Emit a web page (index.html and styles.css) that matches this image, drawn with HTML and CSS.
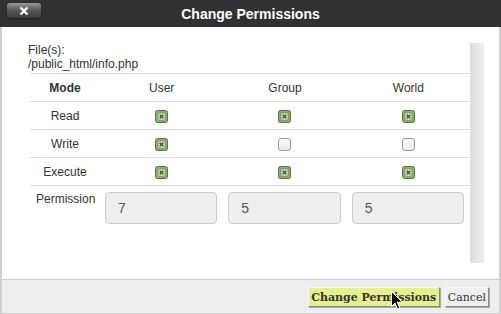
FILE: index.html
```html
<!DOCTYPE html>
<html>
  <head>
    <title>Change Permissions</title>
    <link rel="stylesheet" href="styles.css">
  </head>
  <body>
    <svg width="0" height="0" class="defs">
      <symbol id="cb-on" viewBox="0 0 13 13">
        <rect x="0.5" y="0.5" width="12" height="12" rx="2" fill="#8fae72" stroke="#587542" />
        <rect x="3" y="3" width="7" height="7" fill="#eef3e8" stroke="#6f8e58" stroke-width="0.8" />
        <path d="M4.6 4.6l3.8 3.8M8.4 4.6l-3.8 3.8" stroke="#45632f" stroke-width="1.5" />
      </symbol>
    </svg>

    <div class="dialog">
      <div class="titlebar">
        <div class="tb-left">
          <button class="close-btn" title="Close">
            <svg width="10" height="10" viewBox="0 0 10 10">
              <path d="M1.5 1.5l7 7M8.5 1.5l-7 7" stroke="#fff" stroke-width="2.4" />
            </svg>
          </button>
        </div>
        <div class="title">Change Permissions</div>
        <div></div>
      </div>

      <div class="panel">
        <div class="content">
          <div class="files">
            <div>File(s):</div>
            <div>/public_html/info.php</div>
          </div>

          <table class="perms">
            <tr>
              <th class="mode-col">Mode</th>
              <td>User</td>
              <td>Group</td>
              <td>World</td>
            </tr>
            <tr>
              <td>Read</td>
              <td><svg class="cb"><use href="#cb-on" /></svg></td>
              <td><svg class="cb"><use href="#cb-on" /></svg></td>
              <td><svg class="cb"><use href="#cb-on" /></svg></td>
            </tr>
            <tr>
              <td>Write</td>
              <td><svg class="cb"><use href="#cb-on" /></svg></td>
              <td><span class="cb-off"></span></td>
              <td><span class="cb-off"></span></td>
            </tr>
            <tr>
              <td>Execute</td>
              <td><svg class="cb"><use href="#cb-on" /></svg></td>
              <td><svg class="cb"><use href="#cb-on" /></svg></td>
              <td><svg class="cb"><use href="#cb-on" /></svg></td>
            </tr>
            <tr class="perm-row">
              <td>Permission</td>
              <td class="perm-cell"><input type="text" class="perm-input" value="7" readonly /></td>
              <td class="perm-cell"><input type="text" class="perm-input" value="5" readonly /></td>
              <td class="perm-cell"><input type="text" class="perm-input" value="5" readonly /></td>
            </tr>
          </table>
        </div>
        <div class="scrollbar"></div>
      </div>

      <div class="footer">
        <button class="btn btn-primary">Change Permissions</button>
        <button class="btn">Cancel</button>
        <svg class="cursor" width="12" height="19" viewBox="0 0 12 19">
          <path d="M0.5 0.5v15l3.5-3.5 2.5 6 2.2-1-2.5-5.8h5z" fill="#000" stroke="#fff" stroke-width="1" />
        </svg>
      </div>
    </div>
  </body>
</html>
```

FILE: styles.css
```css
body {
  margin: 0;
  font-family: "Liberation Sans", Arial, sans-serif;
  font-size: 12px;
  color: #333;
  background: #fff;
}
.defs {
  position: absolute;
}
.dialog {
  width: 501px;
  height: 314px;
  display: flex;
  flex-direction: column;
}
.titlebar {
  height: 27px;
  background: #313131;
  display: grid;
  grid-template-columns: 1fr auto 1fr;
  align-items: center;
}
.tb-left {
  align-self: start;
}
.close-btn {
  margin: 3px 0 0 7px;
  width: 34px;
  height: 15px;
  padding: 0;
  border: none;
  border-radius: 3px;
  background: linear-gradient(#9a9a9a, #5a5a5a 45%, #3c3c3c);
  box-shadow: 0 1px 2px rgba(0, 0, 0, 0.5);
  display: flex;
  align-items: center;
  justify-content: center;
}
.title {
  color: #fff;
  font-weight: bold;
  font-size: 14px;
}
.panel {
  height: 252px;
  box-sizing: border-box;
  border-left: 2px solid #cfcfcf;
  border-right: 2px solid #cfcfcf;
  padding: 16px 15px 16px 26px;
  display: flex;
}
.content {
  flex: 1;
}
.scrollbar {
  width: 14px;
  background: linear-gradient(to right, #dcdcdc, #eeeeee);
}
.files {
  line-height: 14px;
  padding-bottom: 2px;
}
.perms {
  margin-left: 2px;
  width: 440px;
  border-collapse: collapse;
  table-layout: fixed;
}
.perms th,
.perms td {
  border-top: 1px solid #dddddd;
  height: 27px;
  padding: 0 6px;
  text-align: center;
  vertical-align: middle;
}
.perms .mode-col {
  width: 58px;
}
.cb {
  width: 13px;
  height: 13px;
  display: inline-block;
  vertical-align: middle;
}
.cb-off {
  display: inline-block;
  vertical-align: middle;
  width: 11px;
  height: 11px;
  border: 1px solid #9a9a9a;
  border-radius: 3px;
  background: linear-gradient(#fbfbfb, #e9e9e9);
}
.perm-row td {
  vertical-align: top;
  padding-top: 6px;
  line-height: 14px;
}
.perms .perm-cell {
  padding: 6px 6px 0 5px;
}
.perm-input {
  width: 100%;
  height: 32px;
  box-sizing: border-box;
  border: 1px solid #cccccc;
  border-radius: 4px;
  background: #eeeeee;
  color: #555;
  font-family: "Liberation Sans", Arial, sans-serif;
  font-size: 14px;
  padding: 0 12px;
}
.footer {
  position: relative;
  height: 35px;
  box-sizing: border-box;
  background: #eeeeee;
  border: 1px solid #cccccc;
  border-left: 2px solid #cfcfcf;
  border-right: 2px solid #cfcfcf;
  padding: 7px 10px 0 0;
  display: flex;
  justify-content: flex-end;
  align-items: flex-start;
  gap: 5px;
}
.btn {
  height: 20px;
  padding: 0 2px;
  white-space: nowrap;
  font-family: "DejaVu Serif", serif;
  font-size: 11px;
  color: #333;
  background: #eeeeee;
  border: 1px solid;
  border-color: #fafafa #888 #888 #fafafa;
  box-shadow: 1px 1px 0 #aaa;
}
.btn-primary {
  font-weight: bold;
  background: #e7f08e;
  width: 132px;
  padding: 0;
}
.cursor {
  position: absolute;
  left: 389px;
  top: 11px;
}
```
